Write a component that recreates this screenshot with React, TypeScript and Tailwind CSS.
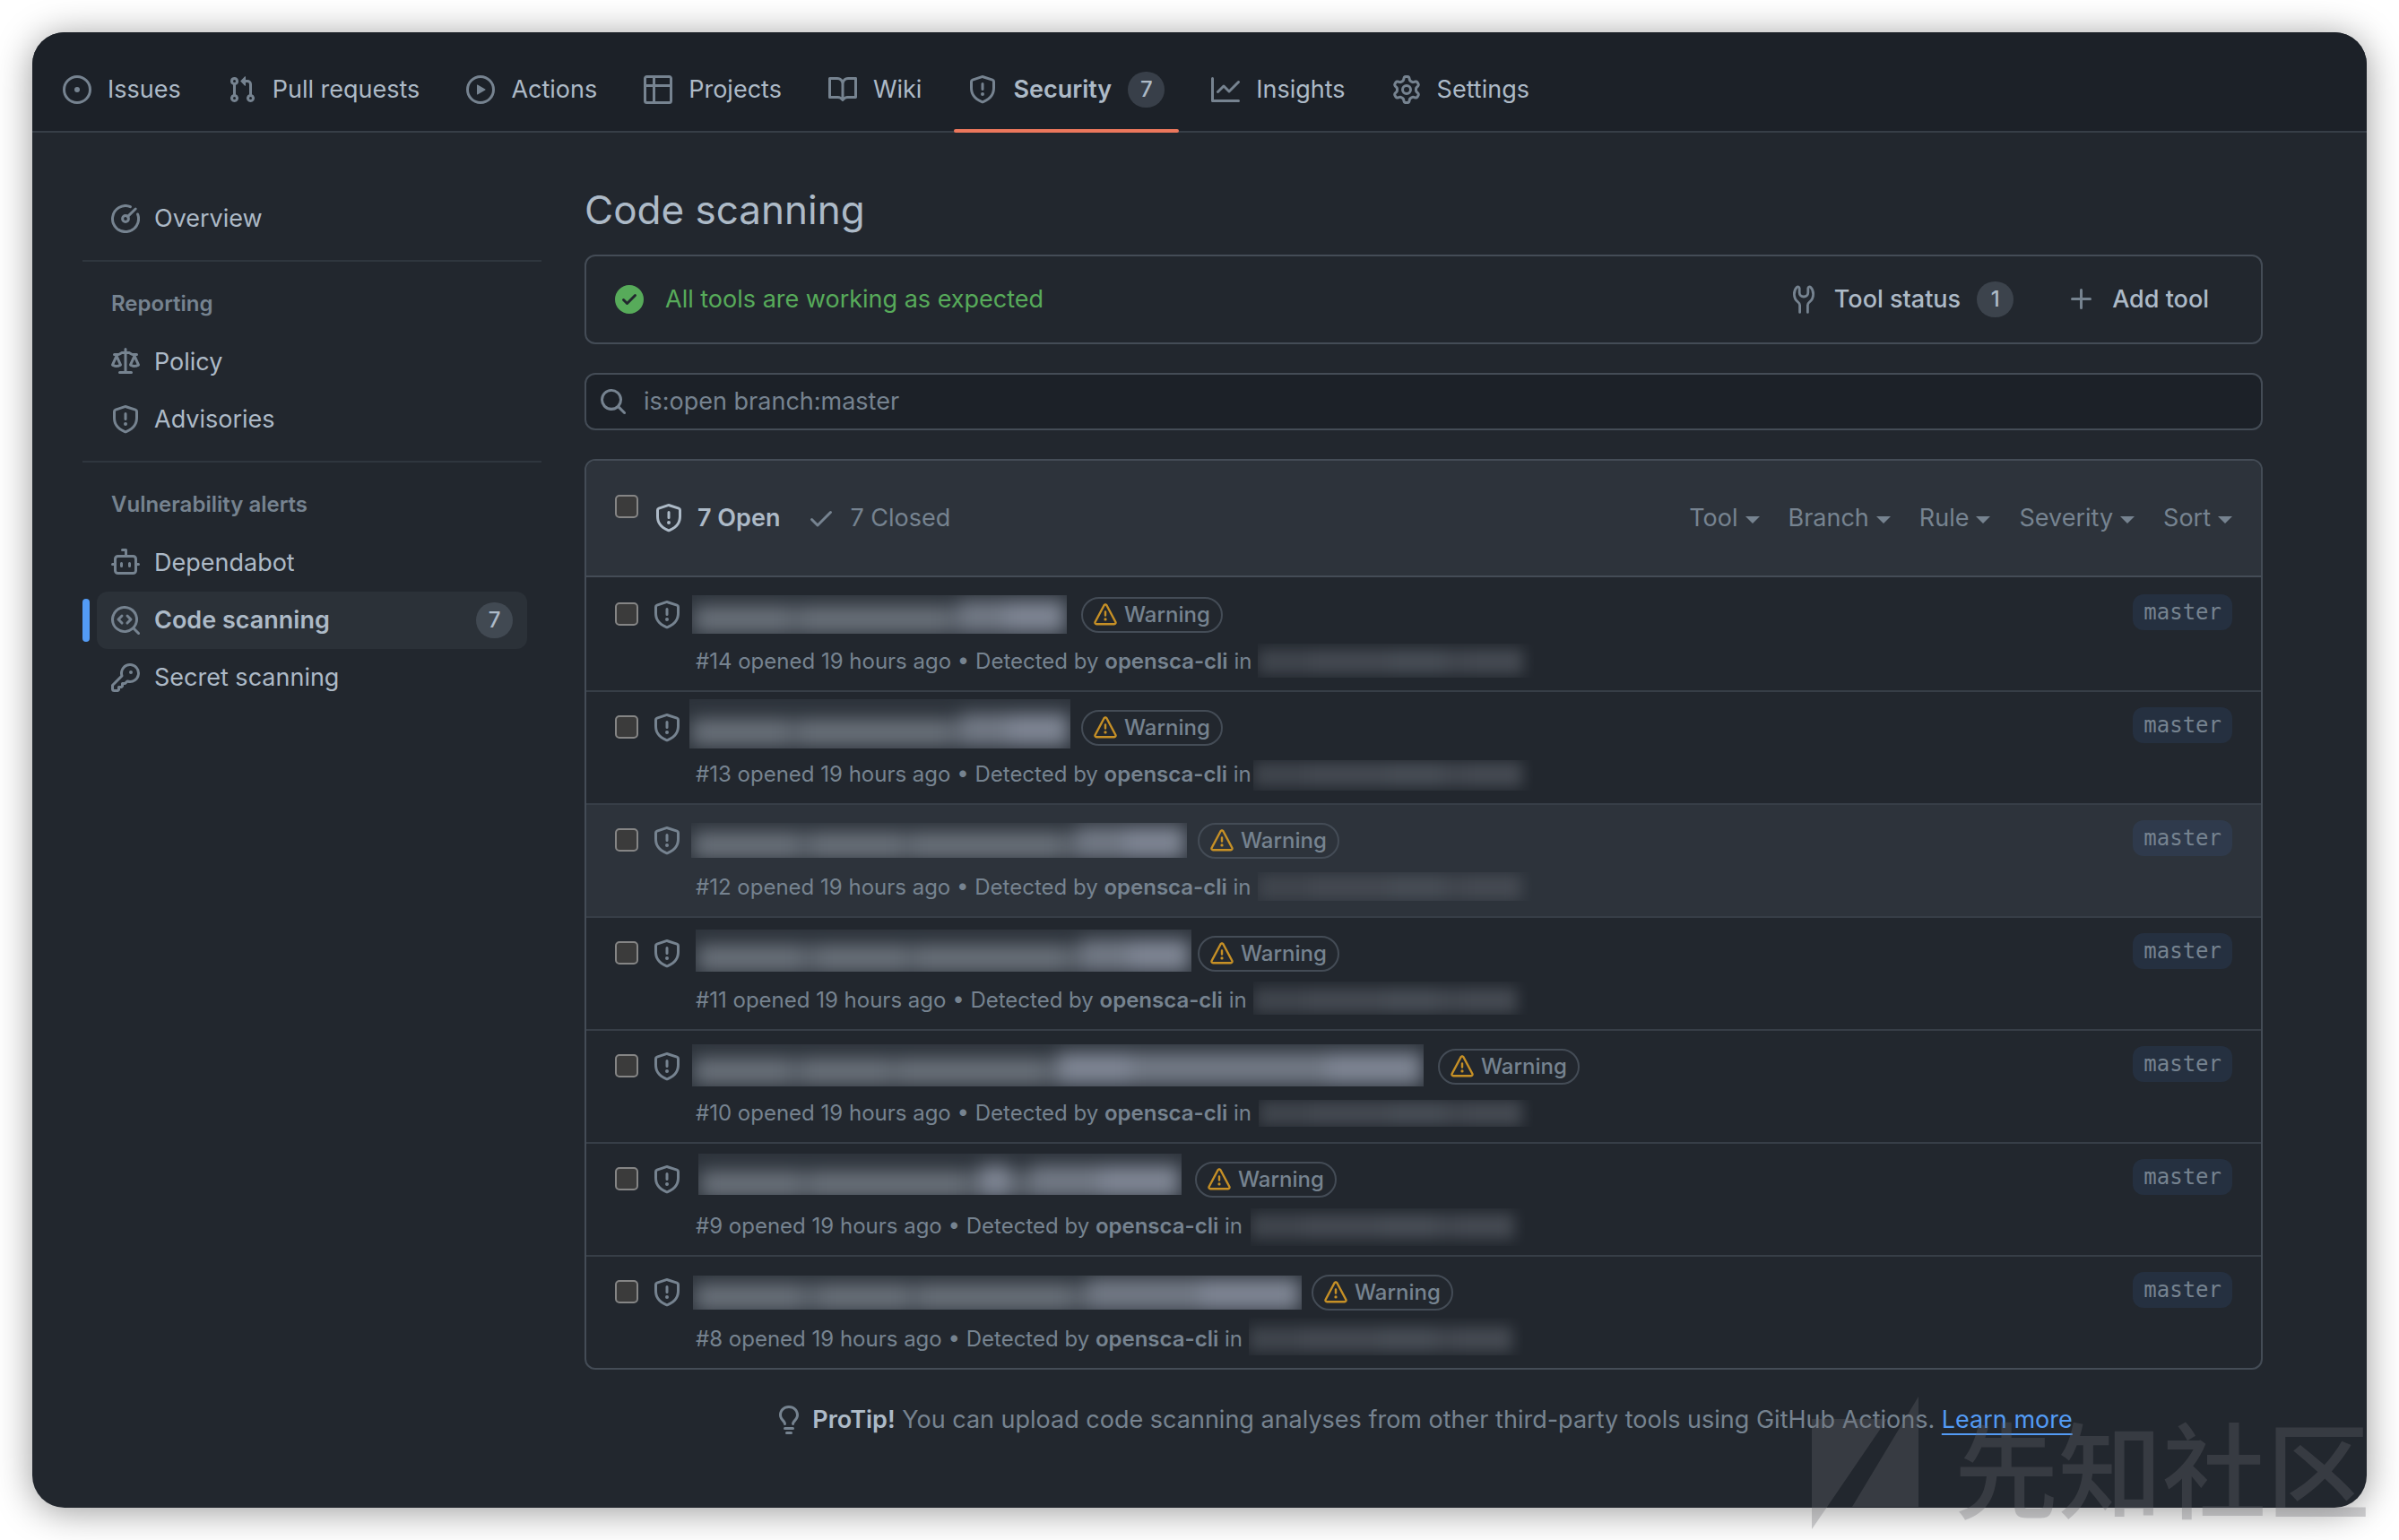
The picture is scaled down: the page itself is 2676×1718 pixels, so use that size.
import React from "react";

type IconProps = { className?: string };
type Glyph = (props: IconProps) => React.ReactElement;

function octicon(...paths: string[]): Glyph {
  return function Octicon({ className = "" }: IconProps) {
    return (
      <svg viewBox="0 0 16 16" fill="currentColor" aria-hidden="true" className={`h-8 w-8 shrink-0 ${className}`}>
        {paths.map((d) => (
          <path key={d} d={d} />
        ))}
      </svg>
    );
  };
}

const IssueIcon = octicon(
  "M8 9.5a1.5 1.5 0 1 0 0-3 1.5 1.5 0 0 0 0 3Z",
  "M8 0a8 8 0 1 1 0 16A8 8 0 0 1 8 0ZM1.5 8a6.5 6.5 0 1 0 13 0 6.5 6.5 0 0 0-13 0Z",
);
const PullRequestIcon = octicon(
  "M1.5 3.25a2.25 2.25 0 1 1 3 2.122v5.256a2.251 2.251 0 1 1-1.5 0V5.372A2.25 2.25 0 0 1 1.5 3.25Zm5.677-.177L9.573.677A.25.25 0 0 1 10 .854V2.5h1A2.5 2.5 0 0 1 13.5 5v5.628a2.251 2.251 0 1 1-1.5 0V5a1 1 0 0 0-1-1h-1v1.646a.25.25 0 0 1-.427.177L7.177 3.427a.25.25 0 0 1 0-.354ZM3.75 2.5a.75.75 0 1 0 0 1.5.75.75 0 0 0 0-1.5Zm0 9.5a.75.75 0 1 0 0 1.5.75.75 0 0 0 0-1.5Zm8.25.75a.75.75 0 1 0 1.5 0 .75.75 0 0 0-1.5 0Z",
);
const PlayIcon = octicon(
  "M8 0a8 8 0 1 1 0 16A8 8 0 0 1 8 0ZM1.5 8a6.5 6.5 0 1 0 13 0 6.5 6.5 0 0 0-13 0Zm4.879-2.773 4.264 2.559a.25.25 0 0 1 0 .428l-4.264 2.559A.25.25 0 0 1 6 10.559V5.442a.25.25 0 0 1 .379-.215Z",
);
const TableIcon = octicon(
  "M0 1.75C0 .784.784 0 1.75 0h12.5C15.216 0 16 .784 16 1.75v12.5A1.75 1.75 0 0 1 14.25 16H1.75A1.75 1.75 0 0 1 0 14.25ZM6.5 6.5v8h7.75a.25.25 0 0 0 .25-.25V6.5Zm8-1.5V1.75a.25.25 0 0 0-.25-.25H6.5V5Zm-13 1.5v7.75c0 .138.112.25.25.25H5v-8ZM5 5V1.5H1.75a.25.25 0 0 0-.25.25V5Z",
);
const BookIcon = octicon(
  "M0 1.75A.75.75 0 0 1 .75 1h4.253c1.227 0 2.317.59 3 1.501A3.743 3.743 0 0 1 11.006 1h4.245a.75.75 0 0 1 .75.75v10.5a.75.75 0 0 1-.75.75h-4.507a2.25 2.25 0 0 0-1.591.659l-.622.621a.75.75 0 0 1-1.06 0l-.622-.621A2.25 2.25 0 0 0 5.258 13H.75a.75.75 0 0 1-.75-.75Zm7.251 10.324.004-5.073-.002-2.253A2.25 2.25 0 0 0 5.003 2.5H1.5v9h3.757a3.75 3.75 0 0 1 1.994.574ZM8.755 4.75l-.004 7.322a3.752 3.752 0 0 1 1.992-.572H14.5v-9h-3.495a2.25 2.25 0 0 0-2.25 2.25Z",
);
const ShieldIcon = octicon(
  "M7.467.133a1.748 1.748 0 0 1 1.066 0l5.25 1.68A1.75 1.75 0 0 1 15 3.48V7c0 1.566-.32 3.182-1.303 4.682-.983 1.498-2.585 2.813-5.032 3.855a1.697 1.697 0 0 1-1.33 0c-2.447-1.042-4.049-2.357-5.032-3.855C1.32 10.182 1 8.566 1 7V3.48a1.75 1.75 0 0 1 1.217-1.667Zm.61 1.429a.25.25 0 0 0-.153 0l-5.25 1.68a.25.25 0 0 0-.174.238V7c0 1.358.275 2.666 1.057 3.86.784 1.194 2.121 2.34 4.366 3.297a.196.196 0 0 0 .154 0c2.245-.956 3.582-2.104 4.366-3.298C13.225 9.666 13.5 8.36 13.5 7V3.48a.251.251 0 0 0-.174-.237l-5.25-1.68ZM8.75 4.75v3a.75.75 0 0 1-1.5 0v-3a.75.75 0 0 1 1.5 0ZM9 10.5a1 1 0 1 1-2 0 1 1 0 0 1 2 0Z",
);
const GraphIcon = octicon(
  "M1.5 1.75V13.5h13.75a.75.75 0 0 1 0 1.5H.75a.75.75 0 0 1-.75-.75V1.75a.75.75 0 0 1 1.5 0Zm14.28 2.53-5.25 5.25a.75.75 0 0 1-1.06 0L7 7.06 4.28 9.78a.751.751 0 0 1-1.042-.018.751.751 0 0 1-.018-1.042l3.25-3.25a.75.75 0 0 1 1.06 0L10 7.94l4.72-4.72a.751.751 0 0 1 1.042.018.751.751 0 0 1 .018 1.042Z",
);
const GearIcon = octicon(
  "M8 0a8.2 8.2 0 0 1 .701.031C9.444.095 9.99.645 10.16 1.29l.288 1.107c.018.066.079.158.212.224.231.114.454.243.668.386.123.082.233.09.299.071l1.103-.303c.644-.176 1.392.021 1.82.63.27.385.506.792.704 1.218.315.675.111 1.422-.364 1.891l-.814.806c-.049.048-.098.147-.088.294.016.257.016.515 0 .772-.01.147.038.246.088.294l.814.806c.475.469.679 1.216.364 1.891a7.977 7.977 0 0 1-.704 1.217c-.428.61-1.176.807-1.82.63l-1.102-.302c-.067-.019-.177-.011-.3.071a5.909 5.909 0 0 1-.668.386c-.133.066-.194.158-.211.224l-.29 1.106c-.168.646-.715 1.196-1.458 1.26a8.006 8.006 0 0 1-1.402 0c-.743-.064-1.289-.614-1.458-1.26l-.289-1.106c-.018-.066-.079-.158-.212-.224a5.738 5.738 0 0 1-.668-.386c-.123-.082-.233-.09-.299-.071l-1.103.303c-.644.176-1.392-.021-1.82-.63a8.12 8.12 0 0 1-.704-1.218c-.315-.675-.111-1.422.363-1.891l.815-.806c.05-.048.098-.147.088-.294a6.214 6.214 0 0 1 0-.772c.01-.147-.038-.246-.088-.294l-.815-.806C.635 6.045.431 5.298.746 4.623a7.92 7.92 0 0 1 .704-1.217c.428-.61 1.176-.807 1.82-.63l1.102.302c.067.019.177.011.3-.071.214-.143.437-.272.668-.386.133-.066.194-.158.211-.224l.29-1.106C6.009.645 6.556.095 7.299.03 7.53.01 7.764 0 8 0Zm-.571 1.525c-.036.003-.108.036-.137.146l-.289 1.105c-.147.561-.549.967-.998 1.189-.173.086-.34.183-.5.29-.417.278-.97.423-1.529.27l-1.103-.303c-.109-.03-.175.016-.195.045-.22.312-.412.644-.573.99-.014.031-.021.11.059.19l.815.806c.411.406.562.957.53 1.456a4.709 4.709 0 0 0 0 .582c.032.499-.119 1.05-.53 1.456l-.815.806c-.081.08-.073.159-.059.19.162.346.353.677.573.989.02.03.085.076.195.046l1.102-.303c.56-.153 1.113-.008 1.53.27.161.107.328.204.501.29.447.222.85.629.997 1.189l.289 1.105c.029.109.101.143.137.146a6.6 6.6 0 0 0 1.142 0c.036-.003.108-.036.137-.146l.289-1.105c.147-.561.549-.967.998-1.189.173-.086.34-.183.5-.29.417-.278.97-.423 1.529-.27l1.103.303c.109.029.175-.016.195-.045.22-.313.411-.644.573-.99.014-.031.021-.11-.059-.19l-.815-.806c-.411-.406-.562-.957-.53-1.456a4.709 4.709 0 0 0 0-.582c-.032-.499.119-1.05.53-1.456l.815-.806c.081-.08.073-.159.059-.19a6.464 6.464 0 0 0-.573-.989c-.02-.03-.085-.076-.195-.046l-1.102.303c-.56.153-1.113.008-1.53-.27a4.44 4.44 0 0 0-.501-.29c-.447-.222-.85-.629-.997-1.189l-.289-1.105c-.029-.11-.101-.143-.137-.146a6.6 6.6 0 0 0-1.142 0ZM11 8a3 3 0 1 1-6 0 3 3 0 0 1 6 0ZM9.5 8a1.5 1.5 0 1 0-3.001.001A1.5 1.5 0 0 0 9.5 8Z",
);
const LawIcon = octicon(
  "M8.75.75V2h.985c.304 0 .603.08.867.231l1.29.736c.038.022.08.033.124.033h2.234a.75.75 0 0 1 0 1.5h-.427l2.111 4.692a.75.75 0 0 1-.154.838l-.53-.53.529.531-.001.002-.002.002-.006.006-.006.005-.01.01-.045.04c-.21.176-.441.327-.686.45C14.556 10.78 13.88 11 13 11a4.498 4.498 0 0 1-2.023-.454 3.544 3.544 0 0 1-.686-.45l-.045-.04-.016-.015-.006-.006-.004-.004v-.001a.75.75 0 0 1-.154-.838L12.178 4.5h-.162c-.305 0-.604-.079-.868-.231l-1.29-.736a.245.245 0 0 0-.124-.033H8.75V13h2.5a.75.75 0 0 1 0 1.5h-6.5a.75.75 0 0 1 0-1.5h2.5V3.5h-.984a.245.245 0 0 0-.124.033l-1.289.737c-.265.15-.564.23-.869.23h-.162l2.112 4.692a.75.75 0 0 1-.154.838l-.53-.53.529.531-.001.002-.002.002-.006.006-.016.015-.045.04c-.21.176-.441.327-.686.45C4.556 10.78 3.88 11 3 11a4.498 4.498 0 0 1-2.023-.454 3.544 3.544 0 0 1-.686-.45l-.045-.04-.016-.015-.006-.006-.004-.004v-.001a.75.75 0 0 1-.154-.838L2.178 4.5H1.75a.75.75 0 0 1 0-1.5h2.234a.249.249 0 0 0 .125-.033l1.288-.737c.265-.15.564-.23.869-.23h.984V.75a.75.75 0 0 1 1.5 0Zm2.945 8.477c.285.135.718.273 1.305.273s1.02-.138 1.305-.273L13 6.327Zm-10 0c.285.135.718.273 1.305.273s1.02-.138 1.305-.273L3 6.327Z",
);
const DependabotIcon = octicon(
  "M5.75 7.5a.75.75 0 0 1 .75.75v1.5a.75.75 0 0 1-1.5 0v-1.5a.75.75 0 0 1 .75-.75Zm5.25.75a.75.75 0 0 0-1.5 0v1.5a.75.75 0 0 0 1.5 0v-1.5Z",
  "M6.25 0h2A.75.75 0 0 1 9 .75V3.5h3.25a2.25 2.25 0 0 1 2.25 2.25V8h.75a.75.75 0 0 1 0 1.5h-.75v2.75a2.25 2.25 0 0 1-2.25 2.25h-8.5a2.25 2.25 0 0 1-2.25-2.25V9.5H.75a.75.75 0 0 1 0-1.5h.75V5.75A2.25 2.25 0 0 1 3.75 3.5H7.5v-2H6.25a.75.75 0 0 1 0-1.5ZM3 5.75v6.5c0 .414.336.75.75.75h8.5a.75.75 0 0 0 .75-.75v-6.5a.75.75 0 0 0-.75-.75h-8.5a.75.75 0 0 0-.75.75Z",
);
const CodescanIcon = octicon(
  "M8.47 4.97a.75.75 0 0 0 0 1.06L9.94 7.5 8.47 8.97a.75.75 0 1 0 1.06 1.06l2-2a.75.75 0 0 0 0-1.06l-2-2a.75.75 0 0 0-1.06 0ZM6.53 6.03a.75.75 0 0 0-1.06-1.06l-2 2a.75.75 0 0 0 0 1.06l2 2a.75.75 0 1 0 1.06-1.06L5.06 7.5l1.47-1.47Z",
  "M12.246 13.307a7.501 7.501 0 1 1 1.06-1.06l2.474 2.473a.749.749 0 0 1-.326 1.275.749.749 0 0 1-.734-.215ZM1.5 7.5a6.002 6.002 0 0 0 3.608 5.504 6.002 6.002 0 0 0 6.486-1.117.748.748 0 0 1 .292-.293A6 6 0 1 0 1.5 7.5Z",
);
const KeyIcon = octicon(
  "M10.5 0a5.499 5.499 0 1 1-1.288 10.848l-.932.932a.749.749 0 0 1-.53.22H7v.75a.749.749 0 0 1-.22.53l-.5.5a.749.749 0 0 1-.53.22H5v.75a.749.749 0 0 1-.22.53l-.5.5a.749.749 0 0 1-.53.22h-2A1.75 1.75 0 0 1 0 14.25v-2c0-.199.079-.389.22-.53l4.932-4.932A5.5 5.5 0 0 1 10.5 0Zm-4 5.5c-.001.431.069.86.205 1.269a.75.75 0 0 1-.181.768L1.5 12.56v1.69c0 .138.112.25.25.25h1.69l.06-.06v-1.19a.75.75 0 0 1 .75-.75h1.19l.06-.06v-1.19a.75.75 0 0 1 .75-.75h1.19l1.023-1.025a.75.75 0 0 1 .768-.18A4 4 0 1 0 6.5 5.5ZM11 6a1 1 0 1 1 0-2 1 1 0 0 1 0 2Z",
);
const PlusIcon = octicon(
  "M7.75 2a.75.75 0 0 1 .75.75V7h4.25a.75.75 0 0 1 0 1.5H8.5v4.25a.75.75 0 0 1-1.5 0V8.5H2.75a.75.75 0 0 1 0-1.5H7V2.75A.75.75 0 0 1 7.75 2Z",
);
const CheckIcon = octicon(
  "M13.78 4.22a.75.75 0 0 1 0 1.06l-7.25 7.25a.75.75 0 0 1-1.06 0L2.22 9.28a.751.751 0 0 1 .018-1.042.751.751 0 0 1 1.042-.018L6 10.94l6.72-6.72a.75.75 0 0 1 1.06 0Z",
);
const SearchIcon = octicon(
  "M10.68 11.74a6 6 0 0 1-7.922-8.982 6 6 0 0 1 8.982 7.922l3.04 3.04a.749.749 0 0 1-.326 1.275.749.749 0 0 1-.734-.215ZM11.5 7a4.499 4.499 0 1 0-8.997 0A4.499 4.499 0 0 0 11.5 7Z",
);
const AlertIcon = octicon(
  "M6.457 1.047c.659-1.234 2.427-1.234 3.086 0l6.082 11.378A1.75 1.75 0 0 1 14.082 15H1.918a1.75 1.75 0 0 1-1.543-2.575Zm1.763.707a.25.25 0 0 0-.44 0L1.698 13.132a.25.25 0 0 0 .22.368h12.164a.25.25 0 0 0 .22-.368Zm.53 3.996v2.5a.75.75 0 0 1-1.5 0v-2.5a.75.75 0 0 1 1.5 0ZM9 11a1 1 0 1 1-2 0 1 1 0 0 1 2 0Z",
);
const CheckCircleIcon = octicon(
  "M8 16A8 8 0 1 1 8 0a8 8 0 0 1 0 16Zm3.78-9.72a.751.751 0 0 0-.018-1.042.751.751 0 0 0-1.042-.018L6.75 9.19 5.28 7.72a.751.751 0 0 0-1.042.018.751.751 0 0 0-.018 1.042l2 2a.75.75 0 0 0 1.06 0Z",
);
const BulbIcon = octicon(
  "M8 1.5c-2.363 0-4 1.69-4 3.75 0 .984.424 1.625.984 2.304l.214.253c.223.264.47.556.673.848.284.411.537.896.621 1.49a.75.75 0 0 1-1.484.211c-.04-.282-.163-.547-.37-.847a8.456 8.456 0 0 0-.542-.68c-.084-.1-.173-.205-.268-.32C3.201 7.75 2.5 6.766 2.5 5.25 2.5 2.31 4.863 0 8 0s5.5 2.31 5.5 5.25c0 1.516-.701 2.5-1.328 3.259-.095.115-.184.22-.268.319-.207.245-.383.453-.541.681-.208.3-.33.565-.37.847a.751.751 0 0 1-1.485-.212c.084-.593.337-1.078.621-1.489.203-.292.45-.584.673-.848.075-.088.147-.173.213-.253.561-.679.985-1.32.985-2.304 0-2.06-1.637-3.75-4-3.75ZM5.75 12h4.5a.75.75 0 0 1 0 1.5h-4.5a.75.75 0 0 1 0-1.5ZM6 15.25a.75.75 0 0 1 .75-.75h2.5a.75.75 0 0 1 0 1.5h-2.5a.75.75 0 0 1-.75-.75Z",
);

function MeterIcon({ className = "" }: IconProps) {
  return (
    <svg viewBox="0 0 16 16" fill="none" stroke="currentColor" strokeWidth="1.5" strokeLinecap="round" aria-hidden="true" className={`h-8 w-8 shrink-0 ${className}`}>
      <path d="M14.8 5.5A7.25 7.25 0 1 1 10.7 1.3" />
      <path d="M13.6 2.5 9.2 6.8" />
      <circle cx="8" cy="8" r="1.7" />
    </svg>
  );
}

function WrenchIcon({ className = "" }: IconProps) {
  return (
    <svg viewBox="0 0 16 16" fill="none" stroke="currentColor" strokeWidth="1.4" strokeLinecap="round" strokeLinejoin="round" aria-hidden="true" className={`h-8 w-8 shrink-0 ${className}`}>
      <path d="M5.8 15.2v-4c0-.8-.4-1.200-1.100-1.800C3.200 8.100 2.700 6.600 2.700 5.100c0-1.600.5-2.900 1.400-3.800.6-.6 1.400-.3 1.500.5v2.500c0 1.200 1 2.200 2.400 2.200s2.400-1 2.400-2.200V1.800c.1-.8.9-1.100 1.500-.5.9.9 1.400 2.200 1.400 3.800 0 1.500-.5 3-2 4.300-.7.6-1.100 1-1.100 1.800v4" />
    </svg>
  );
}

const navItems: { label: string; icon: Glyph; count?: number }[] = [
  { label: "Issues", icon: IssueIcon },
  { label: "Pull requests", icon: PullRequestIcon },
  { label: "Actions", icon: PlayIcon },
  { label: "Projects", icon: TableIcon },
  { label: "Wiki", icon: BookIcon },
  { label: "Security", icon: ShieldIcon, count: 7 },
  { label: "Insights", icon: GraphIcon },
  { label: "Settings", icon: GearIcon },
];

function Counter({ value }: { value: number }) {
  return (
    <span className="flex h-10 w-[41px] shrink-0 items-center justify-center rounded-full bg-[#636e7b66] text-[24px] font-medium leading-10 text-[#adbac7]">
      {value}
    </span>
  );
}

function TopNav() {
  return (
    <nav aria-label="Repository" className="flex h-28 items-stretch gap-5 border-b-2 border-[#373e47] bg-[#1c2128] px-[18px]">
      {navItems.map(({ label, icon: Icon, count }) => (
        <a
          key={label}
          href="#"
          aria-current={count ? "page" : undefined}
          className="relative flex items-center gap-[18px] px-4 pt-[18px]"
        >
          <Icon className="text-[#768390]" />
          <span className={count ? "font-semibold" : ""}>{label}</span>
          {count && <Counter value={count} />}
          {count && <span className="absolute inset-x-0 -bottom-0.5 h-1 rounded-sm bg-[#ec775c]" />}
        </a>
      ))}
    </nav>
  );
}

function SideLink({ label, icon: Icon, count }: { label: string; icon: Glyph; count?: number }) {
  return (
    <li className="relative px-4">
      {count && <span className="absolute top-2 left-0 h-12 w-2 rounded-full bg-[#539bf5]" />}
      <a
        href="#"
        className={`flex h-16 items-center gap-4 rounded-xl px-4 ${count ? "bg-[#2b3138] font-semibold" : ""}`}
      >
        <Icon className="text-[#768390]" />
        <span className="flex-1">{label}</span>
        {count && <Counter value={count} />}
      </a>
    </li>
  );
}

function SideHeading({ children }: { children: React.ReactNode }) {
  return (
    <>
      <hr className="my-3.5 border-t-2 border-[#2f363e]" />
      <h2 className="flex h-[66px] items-center px-8 text-[24px] font-semibold text-[#768390]">{children}</h2>
    </>
  );
}

function Sidebar() {
  return (
    <aside className="w-[512px] shrink-0 pt-16">
      <ul>
        <SideLink label="Overview" icon={MeterIcon} />
      </ul>
      <SideHeading>Reporting</SideHeading>
      <ul>
        <SideLink label="Policy" icon={LawIcon} />
        <SideLink label="Advisories" icon={ShieldIcon} />
      </ul>
      <SideHeading>Vulnerability alerts</SideHeading>
      <ul>
        <SideLink label="Dependabot" icon={DependabotIcon} />
        <SideLink label="Code scanning" icon={CodescanIcon} count={7} />
        <SideLink label="Secret scanning" icon={KeyIcon} />
      </ul>
    </aside>
  );
}

/* Position and size of a redaction tile relative to the text slot it covers. */
type Tile = { left: number; top: number; width: number; height: number };
type Segment = [grow: number, tone: "latin" | "gap" | "cjk" | "bright"];
type Alert = { id: number; slot: number; title: Tile; segments: Segment[]; path: Tile; hovered?: boolean };

const alerts: Alert[] = [
  { id: 14, slot: 430, title: { left: -4, top: -2, width: 418, height: 43 }, segments: [[26, "latin"], [3, "gap"], [40, "latin"], [3, "gap"], [13, "cjk"], [16, "bright"]], path: { left: 0, top: -2, width: 308, height: 38 } },
  { id: 13, slot: 430, title: { left: -7, top: -12, width: 425, height: 55 }, segments: [[26, "latin"], [3, "gap"], [40, "latin"], [3, "gap"], [13, "cjk"], [16, "bright"]], path: { left: -4, top: 2, width: 312, height: 34 } },
  { id: 12, slot: 560, title: { left: -5, top: 0, width: 553, height: 39 }, segments: [[21, "latin"], [3, "gap"], [18, "latin"], [2, "gap"], [30, "latin"], [3, "gap"], [10, "cjk"], [12, "bright"]], path: { left: 1, top: 1, width: 306, height: 32 }, hovered: true },
  { id: 11, slot: 560, title: { left: 0, top: -7, width: 553, height: 47 }, segments: [[21, "latin"], [3, "gap"], [18, "latin"], [2, "gap"], [30, "latin"], [3, "gap"], [10, "cjk"], [12, "bright"]], path: { left: 1, top: -3, width: 306, height: 37 } },
  { id: 10, slot: 828, title: { left: -4, top: -5, width: 816, height: 47 }, segments: [[13, "latin"], [2, "gap"], [12, "latin"], [1, "gap"], [20, "latin"], [2, "gap"], [10, "bright"], [3, "cjk"], [8, "cjk"], [2, "cjk"], [14, "cjk"], [13, "bright"]], path: { left: 1, top: 3, width: 306, height: 30 } },
  { id: 9, slot: 557, title: { left: 3, top: -9, width: 539, height: 46 }, segments: [[20, "latin"], [2, "gap"], [31, "latin"], [3, "gap"], [6, "bright"], [4, "gap"], [14, "cjk"], [16, "bright"]], path: { left: 2, top: -2, width: 306, height: 42 } },
  { id: 8, slot: 687, title: { left: -3, top: 1, width: 679, height: 38 }, segments: [[17, "latin"], [3, "gap"], [14, "latin"], [2, "gap"], [24, "latin"], [3, "gap"], [18, "cjk"], [16, "bright"]], path: { left: 0, top: -6, width: 306, height: 42 } },
];

const tones = {
  latin: "mt-1.5 bg-[#6a717a]",
  gap: "mt-1.5 bg-[#5a616a]",
  cjk: "bg-[#727985]",
  bright: "bg-[#7f8694]",
};

/* The smear keeps its place inside the row, whatever the size of the tile that clips it. */
function TitleRedaction({ tile, segments }: { tile: Tile; segments: Segment[] }) {
  return (
    <span className="absolute overflow-hidden bg-[#2d333b]" style={tile}>
      <span className="absolute inset-x-0.5 flex h-9 blur-[10px]" style={{ top: 4 - tile.top }}>
        {segments.map(([grow, tone], i) => (
          <span key={i} className={tones[tone]} style={{ flexGrow: grow }} />
        ))}
      </span>
    </span>
  );
}

function PathRedaction({ tile }: { tile: Tile }) {
  return (
    <span className="absolute overflow-hidden" style={tile}>
      <span className="absolute right-3 left-0 flex h-7 blur-[8px]" style={{ top: 4 - tile.top }}>
        <span className="flex-2 bg-[#40454d]" />
        <span className="flex-3 bg-[#444951]" />
        <span className="flex-2 bg-[#474d55]" />
        <span className="flex-1 bg-[#42474f]" />
        <span className="flex-2 bg-[#454a52]" />
      </span>
    </span>
  );
}

function Checkbox({ label, className = "" }: { label: string; className?: string }) {
  return (
    <input
      type="checkbox"
      aria-label={label}
      className={`h-[26px] w-[26px] shrink-0 appearance-none rounded-[5px] border-2 border-[#858585] bg-[#3b3b3b] ${className}`}
    />
  );
}

function AlertRow({ alert, first }: { alert: Alert; first: boolean }) {
  return (
    <li
      className={`flex h-[126px] items-start border-t-2 px-8 ${first ? "border-transparent" : "border-[#373e47]"} ${alert.hovered ? "bg-[#2d333b]" : ""}`}
    >
      <Checkbox label={`Select alert ${alert.id}`} className="mt-[26px]" />
      <ShieldIcon className="mt-6 ml-4 text-[#768390]" />
      <div className="ml-4 min-w-0 flex-1 pt-5">
        <div className="flex h-10">
          <a href="#" aria-label={`Alert ${alert.id}`} className="relative block shrink-0" style={{ width: alert.slot }}>
            <TitleRedaction tile={alert.title} segments={alert.segments} />
          </a>
          <span className="flex h-10 items-center gap-2 rounded-full border-2 border-[#444c56] px-3 text-[24px] font-medium text-[#768390]">
            <AlertIcon className="h-[26px] w-[26px] text-[#c69026]" />
            Warning
          </span>
        </div>
        <p className="mt-3.5 flex h-9 items-center text-[24px] whitespace-pre text-[#768390]">
          #{alert.id} opened 19 hours ago • Detected by <b className="font-semibold">opensca-cli</b> in{" "}
          <span className="relative h-9">
            <PathRedaction tile={alert.path} />
          </span>
        </p>
      </div>
      <span className="mt-[17px] flex h-10 items-center rounded-xl bg-[#4184e41a] px-3 font-['DejaVu_Sans_Mono',monospace] text-[24px] text-[#768390]">
        master
      </span>
    </li>
  );
}

function FilterButton({ label }: { label: string }) {
  return (
    <button type="button" className="flex items-center gap-2">
      {label}
      <svg viewBox="0 0 16 8" fill="currentColor" aria-hidden="true" className="mt-1 h-2 w-4">
        <path d="M0 0h16L8 8Z" />
      </svg>
    </button>
  );
}

function AlertList() {
  return (
    <section className="mt-8 overflow-hidden rounded-xl border-2 border-[#444c56]">
      <div className="flex h-[130px] items-center border-b-2 border-[#444c56] bg-[#2d333b] px-8 text-[#768390]">
        <Checkbox label="Select all alerts" className="mt-[38px] self-start" />
        <a href="#" className="ml-[18px] flex items-center gap-4 font-semibold text-[#adbac7]">
          <ShieldIcon />7 Open
        </a>
        <a href="#" className="ml-[30px] flex items-center gap-4">
          <CheckIcon />7 Closed
        </a>
        <div className="ml-auto flex gap-8">
          {["Tool", "Branch", "Rule", "Severity", "Sort"].map((f) => (
            <FilterButton key={f} label={f} />
          ))}
        </div>
      </div>
      <ul>
        {alerts.map((a, i) => (
          <AlertRow key={a.id} alert={a} first={i === 0} />
        ))}
      </ul>
    </section>
  );
}

function Watermark() {
  return (
    <div
      aria-hidden="true"
      className="pointer-events-none absolute right-8 bottom-3 flex items-end gap-10 text-[#6a6a70] opacity-30"
    >
      <svg viewBox="0 0 119 148" fill="currentColor" className="h-[148px] w-[119px]">
        <path d="M0 25H84L0 148ZM119 0V123H45Z" />
      </svg>
      <span className="mb-3.5 font-['Noto_Sans_CJK_SC',sans-serif] text-[116px] leading-[116px] font-medium">先知社区</span>
    </div>
  );
}

export default function App() {
  return (
    <div className="relative min-h-screen bg-white p-9 font-['Inter',sans-serif] text-[27px] leading-10 text-[#adbac7]">
      <div className="min-h-[calc(100vh-72px)] overflow-hidden rounded-[36px] bg-[#22272e] shadow-[0_4px_40px_rgba(0,0,0,0.4)]">
        <TopNav />
        <div className="flex gap-12 pr-[116px] pl-14">
          <Sidebar />
          <main className="min-w-0 flex-1 pt-[54px]">
            <h1 className="text-[44px] leading-16">Code scanning</h1>
            <section className="mt-[18px] flex h-[100px] items-center rounded-xl border-2 border-[#444c56] px-8">
              <CheckCircleIcon className="text-[#57ab5a]" />
              <p className="ml-6 flex-1 text-[#57ab5a]">All tools are working as expected</p>
              <a href="#" className="flex items-center gap-[18px] font-medium">
                <WrenchIcon className="text-[#768390]" />
                Tool status
                <Counter value={1} />
              </a>
              <a href="#" className="mr-[26px] ml-[60px] flex items-center gap-[18px] font-medium">
                <PlusIcon className="text-[#768390]" />
                Add tool
              </a>
            </section>
            <label className="mt-8 flex h-16 items-center rounded-xl border-2 border-[#444c56] bg-[#1c2128] px-3.5 text-[#768390]">
              <SearchIcon />
              <input
                type="text"
                aria-label="Search alerts"
                defaultValue="is:open branch:master"
                className="ml-[18px] min-w-0 flex-1 bg-transparent outline-none"
              />
            </label>
            <AlertList />
            <p className="mt-9 flex items-center justify-center whitespace-pre text-[#768390]">
              <BulbIcon className="mr-2.5" />
              <b className="font-semibold text-[#adbac7]">ProTip!</b> You can upload code scanning analyses from other
              third-party tools using GitHub Actions.{" "}
              <a href="#" className="text-[#539bf5] underline decoration-2 underline-offset-6">
                Learn more
              </a>
            </p>
          </main>
        </div>
      </div>
      <Watermark />
    </div>
  );
}
